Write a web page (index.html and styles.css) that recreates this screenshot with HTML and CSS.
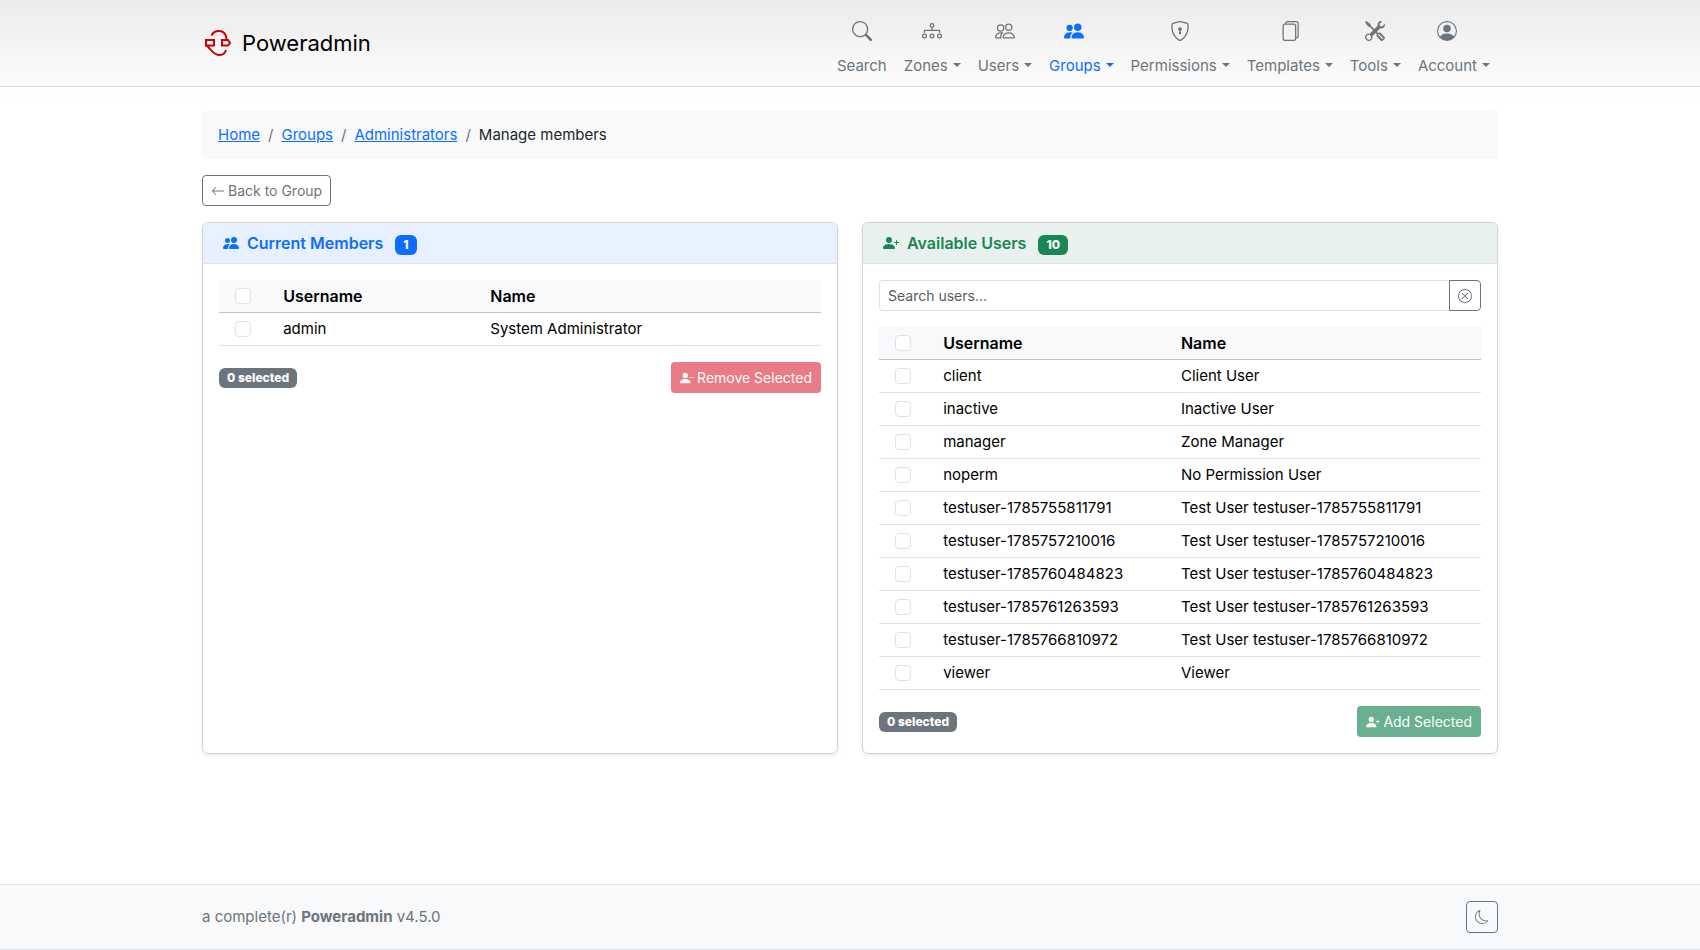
FILE: index.html
```
<!DOCTYPE html>
<html lang="en">
<head>
    <meta charset="UTF-8">
    <meta name="viewport" content="width=device-width, initial-scale=1.0">
    <title>Manage members - Poweradmin</title>
    <link rel="stylesheet" href="styles.css">
</head>
<body>
    <!-- icons used more than once -->
    <svg class="sprite" aria-hidden="true">
        <symbol id="people-fill" viewBox="0 0 16 16">
            <path d="M7 14s-1 0-1-1 1-4 5-4 5 3 5 4-1 1-1 1zm4-6a3 3 0 1 0 0-6 3 3 0 0 0 0 6m-5.784 6A2.24 2.24 0 0 1 5 13c0-1.355.68-2.75 1.936-3.72A6.3 6.3 0 0 0 5 9c-4 0-5 3-5 4s1 1 1 1zM4.5 8a2.5 2.5 0 1 0 0-5 2.5 2.5 0 0 0 0 5"/>
        </symbol>
        <symbol id="person-plus" viewBox="0 0 16 16">
            <path d="M1 14s-1 0-1-1 1-4 6-4 6 3 6 4-1 1-1 1zm5-6a3 3 0 1 0 0-6 3 3 0 0 0 0 6"/>
            <path d="M13.5 5a.5.5 0 0 1 .5.5V7h1.5a.5.5 0 0 1 0 1H14v1.5a.5.5 0 0 1-1 0V8h-1.5a.5.5 0 0 1 0-1H13V5.5a.5.5 0 0 1 .5-.5"/>
        </symbol>
    </svg>

    <header class="header">
        <div class="container header__inner">
            <a class="brand" href="#">
                <svg class="brand__logo" viewBox="0 0 30 30" fill="none" stroke="#c00" stroke-width="2">
                    <path d="M9.500 7.500C11 4 14 3 17 3c4 0 7 3 7.500 8M4 17c4 2 6 10 14 10 3 0 5-2 6-5"/>
                    <path d="M4 12h8v5.500H4zM20 12h6l2 3-2 2.500h-6z"/>
                </svg>
                <span>Poweradmin</span>
            </a>
            <nav class="nav">
                <a class="nav__link" href="#">
                    <svg class="nav__icon" viewBox="0 0 16 16"><path d="M11.742 10.344a6.5 6.5 0 1 0-1.397 1.398h-.001q.044.06.098.115l3.85 3.85a1 1 0 0 0 1.415-1.414l-3.85-3.85a1 1 0 0 0-.115-.1zM12 6.5a5.5 5.5 0 1 1-11 0 5.5 5.5 0 0 1 11 0"/></svg>
                    <span>Search</span>
                </a>
                <a class="nav__link" href="#">
                    <svg class="nav__icon" viewBox="0 0 16 16" fill="none" stroke="currentColor"><circle cx="8" cy="3.5" r="1.4"/><circle cx="2" cy="12" r="1.5"/><circle cx="8" cy="12" r="1.5"/><circle cx="14" cy="12" r="1.5"/><path d="M8 5v3M2 9.500V7.500h12v2"/></svg>
                    <span class="nav__toggle">Zones</span>
                </a>
                <a class="nav__link" href="#">
                    <svg class="nav__icon" viewBox="0 0 16 16"><path d="M15 14s1 0 1-1-1-4-5-4-5 3-5 4 1 1 1 1zm-7.978-1L7 12.996c.001-.264.167-1.03.76-1.720C8.312 10.629 9.282 10 11 10c1.717 0 2.687.63 3.240 1.276.593.69.758 1.457.76 1.720l-.008.002-.014.002zM11 7a2 2 0 1 0 0-4 2 2 0 0 0 0 4m3-2a3 3 0 1 1-6 0 3 3 0 0 1 6 0M6.936 9.280a6 6 0 0 0-1.230-.247A7 7 0 0 0 5 9c-4 0-5 3-5 4q0 1 1 1h4.216A2.240 2.240 0 0 1 5 13c0-1.010.377-2.042 1.090-2.904.243-.294.526-.569.846-.816M4.920 10A5.500 5.500 0 0 0 4 13H1c0-.26.164-1.030.76-1.724.545-.636 1.492-1.256 3.160-1.275ZM1.500 5.500a3 3 0 1 1 6 0 3 3 0 0 1-6 0m3-2a2 2 0 1 0 0 4 2 2 0 0 0 0-4"/></svg>
                    <span class="nav__toggle">Users</span>
                </a>
                <a class="nav__link nav__link--label nav__link--active" href="#" aria-current="page">
                    <svg class="nav__icon"><use href="#people-fill"/></svg>
                    <span class="nav__toggle">Groups</span>
                </a>
                <a class="nav__link" href="#">
                    <svg class="nav__icon" viewBox="0 0 16 16"><path d="M5.338 1.590a61 61 0 0 0-2.837.856.48.48 0 0 0-.328.39c-.554 4.157.726 7.190 2.253 9.188a10.700 10.700 0 0 0 2.287 2.233c.346.244.652.42.893.533q.18.085.293.118a1 1 0 0 0 .101.025 1 1 0 0 0 .1-.025q.114-.034.294-.118c.24-.113.547-.29.893-.533a10.700 10.700 0 0 0 2.287-2.233c1.527-1.997 2.807-5.031 2.253-9.188a.48.48 0 0 0-.328-.39c-.651-.213-1.750-.56-2.837-.855C9.552 1.290 8.531 1.067 8 1.067c-.53 0-1.552.223-2.662.524zM5.072.56C6.157.265 7.310 0 8 0s1.843.265 2.928.56c1.110.3 2.229.655 2.887.87a1.540 1.540 0 0 1 1.044 1.262c.596 4.477-.787 7.795-2.465 9.990a11.800 11.800 0 0 1-2.517 2.453 7 7 0 0 1-1.048.625c-.28.132-.581.24-.829.24s-.548-.108-.829-.24a7 7 0 0 1-1.048-.625 11.800 11.800 0 0 1-2.517-2.453C1.928 10.487.545 7.169 1.141 2.692A1.540 1.540 0 0 1 2.185 1.430 63 63 0 0 1 5.072.56"/><path d="M9.500 6.500a1.500 1.500 0 0 1-1 1.415l.385 1.990a.5.5 0 0 1-.491.595h-.788a.5.5 0 0 1-.49-.595l.384-1.990a1.500 1.500 0 1 1 2-1.415"/></svg>
                    <span class="nav__toggle">Permissions</span>
                </a>
                <a class="nav__link" href="#">
                    <svg class="nav__icon" viewBox="0 0 16 16"><path d="M13 0H6a2 2 0 0 0-2 2 2 2 0 0 0-2 2v10a2 2 0 0 0 2 2h7a2 2 0 0 0 2-2 2 2 0 0 0 2-2V2a2 2 0 0 0-2-2m0 13V4a2 2 0 0 0-2-2H5a1 1 0 0 1 1-1h7a1 1 0 0 1 1 1v10a1 1 0 0 1-1 1M3 4a1 1 0 0 1 1-1h7a1 1 0 0 1 1 1v10a1 1 0 0 1-1 1H4a1 1 0 0 1-1-1z"/></svg>
                    <span class="nav__toggle">Templates</span>
                </a>
                <a class="nav__link" href="#">
                    <svg class="nav__icon" viewBox="0 0 16 16"><path d="M1 0 0 1l2.200 3.081a1 1 0 0 0 .815.419h.07a1 1 0 0 1 .708.293l2.675 2.675-2.617 2.654A3.003 3.003 0 0 0 0 13a3 3 0 1 0 5.878-.851l2.654-2.617.968.968-.305.914a1 1 0 0 0 .242 1.023l3.270 3.270a.997.997 0 0 0 1.414 0l1.586-1.586a.997.997 0 0 0 0-1.414l-3.270-3.270a1 1 0 0 0-1.023-.242L10.500 9.500l-.96-.96 2.680-2.643A3.005 3.005 0 0 0 16 3q0-.405-.102-.777l-2.140 2.141L12 4l-.364-1.757L13.777.102a3 3 0 0 0-3.675 3.680L7.462 6.460 4.793 3.793a1 1 0 0 1-.293-.707v-.071a1 1 0 0 0-.419-.814zm9.646 10.646a.5.5 0 0 1 .708 0l2.914 2.915a.5.5 0 0 1-.707.707l-2.915-2.914a.5.5 0 0 1 0-.708M3 11l.471.242.529.026.287.445.445.287.026.529L5 13l-.242.471-.026.529-.445.287-.287.445-.529.026L3 15l-.471-.242L2 14.732l-.287-.445L1.268 14l-.026-.529L1 13l.242-.471.026-.529.445-.287.287-.445.529-.026z"/></svg>
                    <span class="nav__toggle">Tools</span>
                </a>
                <a class="nav__link nav__link--label" href="#">
                    <svg class="nav__icon" viewBox="0 0 16 16"><path d="M11 6a3 3 0 1 1-6 0 3 3 0 0 1 6 0"/><path fill-rule="evenodd" d="M0 8a8 8 0 1 1 16 0A8 8 0 0 1 0 8m8-7a7 7 0 0 0-5.468 11.370C3.242 11.226 4.805 10 8 10s4.757 1.225 5.468 2.370A7 7 0 0 0 8 1"/></svg>
                    <span class="nav__toggle">Account</span>
                </a>
            </nav>
        </div>
    </header>

    <main class="container main">
        <nav class="breadcrumb" aria-label="breadcrumb">
            <ol>
                <li><a href="#">Home</a></li>
                <li><a href="#">Groups</a></li>
                <li><a href="#">Administrators</a></li>
                <li>Manage members</li>
            </ol>
        </nav>

        <a class="btn btn--outline" href="#">
            <svg class="btn__icon" viewBox="0 0 16 16"><path fill-rule="evenodd" d="M15 8a.5.5 0 0 0-.5-.5H2.707l3.147-3.146a.5.5 0 1 0-.708-.708l-4 4a.5.5 0 0 0 0 .708l4 4a.5.5 0 0 0 .708-.708L2.707 8.500H14.500A.5.5 0 0 0 15 8"/></svg>
            Back to Group
        </a>

        <div class="cards">
            <section class="card">
                <h2 class="card__header card__header--members">
                    <svg class="card__icon"><use href="#people-fill"/></svg>
                    Current Members
                    <span class="badge badge--primary">1</span>
                </h2>
                <form class="card__body">
                    <table class="table table--members">
                        <thead>
                            <tr>
                                <th class="table__check"><input type="checkbox" aria-label="Select all members"></th>
                                <th class="table__user">Username</th>
                                <th>Name</th>
                            </tr>
                        </thead>
                        <tbody>
                            <tr>
                                <td class="table__check"><input type="checkbox" aria-label="admin"></td>
                                <td>admin</td>
                                <td>System Administrator</td>
                            </tr>
                        </tbody>
                    </table>
                    <div class="card__actions">
                        <span class="badge">0 selected</span>
                        <button class="btn btn--danger" type="submit" disabled>
                            <svg class="btn__icon" viewBox="0 0 16 16"><path d="M1 14s-1 0-1-1 1-4 6-4 6 3 6 4-1 1-1 1zm5-6a3 3 0 1 0 0-6 3 3 0 0 0 0 6"/><path d="M11 7.500a.5.5 0 0 1 .5-.5h4a.5.5 0 0 1 0 1h-4a.5.5 0 0 1-.5-.5"/></svg>
                            Remove Selected
                        </button>
                    </div>
                </form>
            </section>

            <section class="card">
                <h2 class="card__header card__header--available">
                    <svg class="card__icon"><use href="#person-plus"/></svg>
                    Available Users
                    <span class="badge badge--success">10</span>
                </h2>
                <form class="card__body">
                    <div class="search">
                        <input class="search__input" type="text" placeholder="Search users..." aria-label="Search users">
                        <button class="search__clear" type="button" aria-label="Clear search">
                            <svg class="btn__icon" viewBox="0 0 16 16"><path d="M8 15A7 7 0 1 1 8 1a7 7 0 0 1 0 14m0 1A8 8 0 1 0 8 0a8 8 0 0 0 0 16"/><path d="M4.646 4.646a.5.5 0 0 1 .708 0L8 7.293l2.646-2.647a.5.5 0 0 1 .708.708L8.707 8l2.647 2.646a.5.5 0 0 1-.708.708L8 8.707l-2.646 2.647a.5.5 0 0 1-.708-.708L7.293 8 4.646 5.354a.5.5 0 0 1 0-.708"/></svg>
                        </button>
                    </div>
                    <table class="table table--available">
                        <thead>
                            <tr>
                                <th class="table__check"><input type="checkbox" aria-label="Select all users"></th>
                                <th class="table__user">Username</th>
                                <th>Name</th>
                            </tr>
                        </thead>
                        <tbody>
                            <tr>
                                <td class="table__check"><input type="checkbox" aria-label="client"></td>
                                <td>client</td>
                                <td>Client User</td>
                            </tr>
                            <tr>
                                <td class="table__check"><input type="checkbox" aria-label="inactive"></td>
                                <td>inactive</td>
                                <td>Inactive User</td>
                            </tr>
                            <tr>
                                <td class="table__check"><input type="checkbox" aria-label="manager"></td>
                                <td>manager</td>
                                <td>Zone Manager</td>
                            </tr>
                            <tr>
                                <td class="table__check"><input type="checkbox" aria-label="noperm"></td>
                                <td>noperm</td>
                                <td>No Permission User</td>
                            </tr>
                            <tr>
                                <td class="table__check"><input type="checkbox" aria-label="testuser-1785755811791"></td>
                                <td>testuser-1785755811791</td>
                                <td>Test User testuser-1785755811791</td>
                            </tr>
                            <tr>
                                <td class="table__check"><input type="checkbox" aria-label="testuser-1785757210016"></td>
                                <td>testuser-1785757210016</td>
                                <td>Test User testuser-1785757210016</td>
                            </tr>
                            <tr>
                                <td class="table__check"><input type="checkbox" aria-label="testuser-1785760484823"></td>
                                <td>testuser-1785760484823</td>
                                <td>Test User testuser-1785760484823</td>
                            </tr>
                            <tr>
                                <td class="table__check"><input type="checkbox" aria-label="testuser-1785761263593"></td>
                                <td>testuser-1785761263593</td>
                                <td>Test User testuser-1785761263593</td>
                            </tr>
                            <tr>
                                <td class="table__check"><input type="checkbox" aria-label="testuser-1785766810972"></td>
                                <td>testuser-1785766810972</td>
                                <td>Test User testuser-1785766810972</td>
                            </tr>
                            <tr>
                                <td class="table__check"><input type="checkbox" aria-label="viewer"></td>
                                <td>viewer</td>
                                <td>Viewer</td>
                            </tr>
                        </tbody>
                    </table>
                    <div class="card__actions">
                        <span class="badge">0 selected</span>
                        <button class="btn btn--success" type="submit" disabled>
                            <svg class="btn__icon"><use href="#person-plus"/></svg>
                            Add Selected
                        </button>
                    </div>
                </form>
            </section>
        </div>
    </main>

    <footer class="footer">
        <div class="container footer__inner">
            <p>a complete(r) <strong>Poweradmin</strong> v4.5.0</p>
            <button class="theme" type="button" aria-label="Toggle theme">
                <svg class="btn__icon" viewBox="0 0 16 16"><path d="M6 .278a.77.77 0 0 1 .08.858 7.200 7.200 0 0 0-.878 3.460c0 4.021 3.278 7.277 7.318 7.277q.792-.001 1.533-.16a.79.79 0 0 1 .81.316.73.73 0 0 1-.031.893A8.350 8.350 0 0 1 8.344 16C3.734 16 0 12.286 0 7.710 0 4.266 2.114 1.312 5.124.06A.75.75 0 0 1 6 .278M4.858 1.311A7.270 7.270 0 0 0 1.025 7.710c0 4.020 3.279 7.276 7.319 7.276a7.320 7.320 0 0 0 5.205-2.162q-.506.063-1.029.063c-4.610 0-8.343-3.714-8.343-8.290 0-1.167.242-2.278.681-3.286"/></svg>
            </button>
        </div>
    </footer>
</body>
</html>
```
FILE: styles.css
```
* {
    box-sizing: border-box;
    margin: 0;
    padding: 0;
}

:root {
    --primary: #0d6efd;
    --success: #198754;
    --danger: #dc3545;
    --gray: #6c757d;
    --light: #f8f9fa;
    --border: #dee2e6;
}

body {
    display: flex;
    flex-direction: column;
    min-height: 100vh;
    font-family: Inter, "Liberation Sans", sans-serif;
    font-size: 15px;
    line-height: 24px;
    color: #212529;
    background: white linear-gradient(#ebebeb, white 100px) no-repeat;
}

svg {
    fill: currentColor;
}

svg[fill="none"] {
    fill: none;
}

.sprite {
    display: none;
}

.container {
    width: 100%;
    max-width: 1320px;
    margin: 0 auto;
    padding: 0 12px;
}


/* HEADER */
.header {
    border-bottom: 1px solid var(--border);
}

.header__inner {
    display: flex;
    align-items: center;
    justify-content: space-between;
}

.brand {
    display: flex;
    align-items: center;
    gap: 10px;
    font-size: 22px;
    color: black;
    text-decoration: none;
}

.brand__logo {
    width: 30px;
    height: 30px;
}

.nav {
    display: flex;
    gap: 1px;
    padding-top: 12px;
}

.nav__link {
    display: flex;
    flex-direction: column;
    align-items: center;
    gap: 13px;
    padding: 9px 8px 8px;
    color: var(--gray);
    text-decoration: none;
}

.nav__link--active {
    color: var(--primary);
}

.nav__icon {
    width: 20px;
    height: 20px;
}

.nav__link--label .nav__icon {
    margin-right: 14px;
}

.nav__toggle::after {
    content: "";
    display: inline-block;
    margin-left: 5px;
    vertical-align: 4px;
    border-top: 4px solid;
    border-left: 4px solid transparent;
    border-right: 4px solid transparent;
}


/* MAIN */
.main {
    flex: 1;
    padding-top: 24px;
    padding-bottom: 24px;
}

.breadcrumb {
    margin-bottom: 16px;
    padding: 12px 16px;
    background: var(--light);
    border-radius: 4px;
}

.breadcrumb ol {
    display: flex;
    list-style: none;
}

.breadcrumb li + li::before {
    content: "/";
    padding: 0 8px;
    color: var(--gray);
}

.breadcrumb a {
    color: var(--primary);
}


/* BUTTONS */
.btn {
    display: inline-flex;
    align-items: center;
    gap: 3px;
    padding: 4px 8px;
    border: 1px solid transparent;
    border-radius: 4px;
    font-family: inherit;
    font-size: 14px;
    line-height: 21px;
    color: white;
    text-decoration: none;
}

.btn:disabled {
    opacity: .65;
}

.btn__icon {
    width: 14px;
    height: 14px;
}

.btn--outline {
    border-color: var(--gray);
    color: var(--gray);
}

.btn--danger {
    background: var(--danger);
}

.btn--success {
    background: var(--success);
}


/* CARDS */
.cards {
    display: grid;
    grid-template-columns: 1fr 1fr;
    gap: 24px;
    margin-top: 16px;
}

.card {
    background: white;
    border: 1px solid #d0d2d3;
    border-radius: 6px;
    box-shadow: 0 2px 4px rgba(0, 0, 0, .075);
    overflow: hidden;
}

.card__header {
    display: flex;
    align-items: baseline;
    padding: 8px 20px;
    border-bottom: 1px solid #e0e4e8;
    font-size: 16px;
    line-height: 24px;
    font-weight: 600;
}

.card__header--members {
    background: #e7f0ff;
    color: var(--primary);
}

.card__header--available {
    background: #e8f1ed;
    color: var(--success);
}

.card__icon {
    align-self: center;
    width: 16px;
    height: 16px;
    margin-right: 8px;
}

.card__header .badge {
    margin-left: 12px;
}

.card__body {
    padding: 16px;
}

.card__actions {
    display: flex;
    align-items: center;
    justify-content: space-between;
    margin-top: 16px;
}

.badge {
    padding: 4px 8px;
    border-radius: 6px;
    background: var(--gray);
    color: white;
    font-size: 12px;
    line-height: 12px;
    font-weight: 800;
}

.badge--primary {
    background: var(--primary);
}

.badge--success {
    background: var(--success);
}


/* SEARCH */
.search {
    display: flex;
    margin-bottom: 16px;
}

.search__input {
    flex: 1;
    min-width: 0;
    padding: 4px 8px;
    border: 1px solid var(--border);
    border-right: none;
    border-radius: 4px 0 0 4px;
    font-family: inherit;
    font-size: 14px;
    line-height: 21px;
}

.search__input::placeholder {
    color: #595c5f;
}

.search__clear {
    display: flex;
    align-items: center;
    padding: 4px 8px;
    border: 1px solid var(--gray);
    border-radius: 0 4px 4px 0;
    background: white;
    color: var(--gray);
}


/* TABLES */
.table {
    width: 100%;
    table-layout: fixed;
    border-collapse: collapse;
    color: black;
}

.table th,
.table td {
    padding: 4px;
    border-bottom: 1px solid var(--border);
    text-align: left;
}

.table th {
    background: var(--light);
    border-bottom-color: #c0c3c6;
    font-size: 16px;
    font-weight: 600;
}

.table .table__check {
    width: 10%;
    padding-left: 16px;
}

.table--members .table__user {
    width: 34.4%;
}

.table--available .table__user {
    width: 39.5%;
}

.table input {
    display: block;
    appearance: none;
    width: 16px;
    height: 16px;
    border: 1px solid var(--border);
    border-radius: 4px;
    background: white;
}

.table input:checked {
    background: var(--primary);
}


/* FOOTER */
.footer {
    padding: 16px 0;
    border-top: 1px solid var(--border);
    border-bottom: 1px solid var(--border);
    background: var(--light);
    color: var(--gray);
}

.footer__inner {
    display: flex;
    align-items: center;
    justify-content: space-between;
}

.theme {
    display: flex;
    align-items: center;
    justify-content: center;
    width: 32px;
    height: 32px;
    border: 1px solid var(--gray);
    border-radius: 4px;
    background: transparent;
    color: var(--gray);
}
```
